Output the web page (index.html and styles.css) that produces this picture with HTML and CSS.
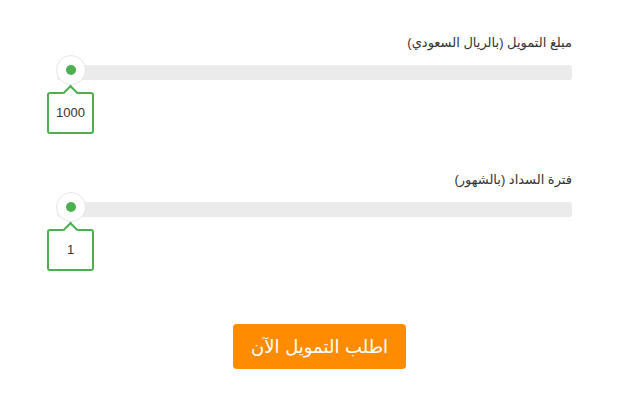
FILE: index.html
```html
<!DOCTYPE html>
<html lang="ar" dir="rtl">
<head>
  <meta charset="UTF-8">
  <meta name="viewport" content="width=device-width, initial-scale=1.0">
  <title>طلب تمويل</title>
  <link rel="stylesheet" href="styles.css">
</head>
<body>
  <main class="calc">
    <!-- المبلغ -->
    <section class="field">
      <label class="field-label">مبلغ التمويل (بالريال السعودي)</label>
      <div class="slider">
        <div class="track"></div>
        <div class="thumb"><span class="dot"></span></div>
      </div>
      <div class="bubble"><span class="arrow"></span>1000</div>
    </section>
    <!-- المدة -->
    <section class="field">
      <label class="field-label">فترة السداد (بالشهور)</label>
      <div class="slider">
        <div class="track"></div>
        <div class="thumb"><span class="dot"></span></div>
      </div>
      <div class="bubble"><span class="arrow"></span>1</div>
    </section>
  </main>
  <div class="actions">
    <button class="btn-apply">اطلب التمويل الآن</button>
  </div>
</body>
</html>
```

FILE: styles.css
```css
body {
  margin: 0;
  padding-top: 33px;
  font-family: "Liberation Sans", "DejaVu Sans", Arial, sans-serif;
  background-color: #ffffff;
  color: #333333;
}
.calc {
  margin: 0 67px 0 57px;
}
.field {
  margin-bottom: 36px;
}
.field-label {
  display: block;
  font-size: 13px;
  line-height: 20px;
  margin-bottom: 12px;
  text-align: right;
}
.slider {
  position: relative;
  height: 15px;
}
.track {
  height: 15px;
  background-color: #ebebeb;
  border-radius: 3px;
}
.thumb {
  position: absolute;
  left: -1px;
  top: -10px;
  width: 28px;
  height: 28px;
  border: 1px solid #e6e6e6;
  border-radius: 50%;
  background-color: #ffffff;
  display: flex;
  align-items: center;
  justify-content: center;
}
.dot {
  width: 10px;
  height: 10px;
  border-radius: 50%;
  background-color: #4caf50;
}
.bubble {
  position: relative;
  box-sizing: border-box;
  width: 47px;
  height: 42px;
  margin-top: 12px;
  margin-left: -10px;
  margin-right: auto;
  border: 2px solid #4caf50;
  border-radius: 3px;
  background-color: #ffffff;
  font-size: 13px;
  line-height: 38px;
  text-align: center;
  direction: ltr;
}
.arrow {
  position: absolute;
  left: 16px;
  top: -7px;
  width: 9px;
  height: 9px;
  background-color: #ffffff;
  border-left: 2px solid #4caf50;
  border-top: 2px solid #4caf50;
  transform: rotate(45deg);
}
.actions {
  display: flex;
  justify-content: center;
  padding-top: 17px;
}
.btn-apply {
  background-color: #ff8c00;
  color: #ffffff;
  border: none;
  border-radius: 4px;
  height: 45px;
  padding: 0 18px;
  font-family: "DejaVu Sans", sans-serif;
  font-size: 18px;
  cursor: pointer;
}
```
